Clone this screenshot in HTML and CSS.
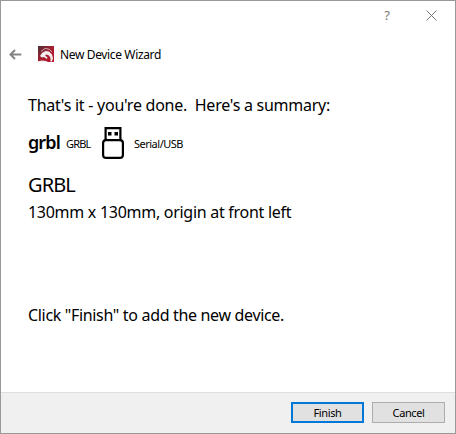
FILE: index.html
```html
<!DOCTYPE html>
<html lang="en">
<head>
<meta charset="utf-8">
<title>New Device Wizard</title>
<link rel="stylesheet" href="styles.css">
</head>
<body>
<div class="window">
  <div class="controls">
    <span class="help">?</span>
    <svg class="close" width="11" height="11" viewBox="0 0 11 11"><path d="M.5.5l10 10M10.500.5l-10 10" /></svg>
  </div>
  <header class="header">
    <svg class="back" width="13" height="11" viewBox="0 0 13 11"><path d="M12.300 5.500H1.500M6 1L1.500 5.500L6 10"/></svg>
    <svg class="app" width="16" height="16" viewBox="0 0 16 16">
      <defs><linearGradient id="red" x1="0" y1="0" x2="1" y2="1"><stop offset="0" stop-color="#4b3038"/><stop offset=".5" stop-color="#a51f30"/><stop offset="1" stop-color="#bd1029"/></linearGradient></defs>
      <path fill="url(#red)" d="M0 0h16v16H0z"/>
      <path fill="none" stroke="#c9a5aa" stroke-width="1" d="M3 5.500L7 2.500L11 3L14 6"/>
      <path fill="#f3eeee" d="M2 10L4 7L7.500 5L11 5.500L14 8.500L15 12L14 15.500H12.500L12.500 12L11 9.500L8.500 8.500L7 9.500L9.500 11.500L9 13L6 11L4 11.500Z"/>
      <path fill="#eee" d="M0 15.200l4-.8 4 .7L10 16H0z"/>
    </svg>
    <h1 class="title">New Device Wizard</h1>
  </header>
  <main class="content">
    <p class="line done">That's it - you're done.&nbsp; Here's a summary:</p>
    <div class="summary">
      <span class="logo">grbl</span>
      <span class="label grbl">GRBL</span>
      <svg class="usb" width="24" height="34" viewBox="0 0 24 34"><path fill="none" stroke="#000" stroke-width="2.200" d="M4.600 14V2.100h14.800V14"/><rect x="2.100" y="14.100" width="19.800" height="17.800" rx="3" fill="#fff" stroke="#000" stroke-width="2.200"/><path d="M7 6h3.500v3.500H7zM13.500 6H17v3.500h-3.500z"/></svg>
      <span class="label serial">Serial/USB</span>
    </div>
    <h2 class="device">GRBL</h2>
    <p class="line size">130mm x 130mm, origin at front left</p>
    <p class="line hint">Click "Finish" to add the new device.</p>
  </main>
  <footer class="footer">
    <button class="button primary">Finish</button>
    <button class="button">Cancel</button>
  </footer>
</div>
</body>
</html>
```
FILE: styles.css
```css
* { box-sizing: border-box; }
body { margin: 0; font-family: "Noto Sans", sans-serif; color: #000; }
h1, h2, p { margin: 0; font-weight: 400; white-space: nowrap; }
svg { display: block; flex: none; }
.window { width: 456px; height: 434px; border: 1px solid #999; background: #fff; display: flex; flex-direction: column; }
.controls { height: 28px; display: flex; justify-content: flex-end; align-items: center; padding-right: 18px; gap: 36px; }
.help { font-size: 13px; line-height: 14px; color: #777; }
.close { stroke: #777; stroke-width: 1; fill: none; }
.header { height: 49px; display: flex; align-items: center; padding: 1px 0 0 8px; }
.back { stroke: #858585; stroke-width: 2; fill: none; }
.app { margin-left: 16px; }
.title { margin: 1px 0 0 6px; font-size: 12px; line-height: 18px; letter-spacing: -.36px; }
.content { flex: 1; padding: 16px 0 0 27px; }
.line { font-size: 16px; line-height: 22px; }
.done { letter-spacing: -.26px; }
.summary { height: 34px; margin-top: 10px; display: flex; align-items: center; }
.logo { width: 38px; font-size: 18px; line-height: 20px; font-weight: 600; letter-spacing: -.9px; padding-bottom: 3px; }
.label { font-size: 11px; line-height: 16px; letter-spacing: -.5px; padding-top: 1px; }
.grbl { width: 35px; letter-spacing: -.85px; }
.serial { margin-left: 9px; }
.device { margin-top: 12px; font-size: 20px; line-height: 26px; letter-spacing: -.9px; }
.size { margin-top: 3px; letter-spacing: -.28px; }
.hint { margin-top: 81px; letter-spacing: -.33px; }
.footer { height: 41px; border-top: 1px solid #dfdfdf; background: #f0f0f0; display: flex; justify-content: flex-end; gap: 8px; padding: 9px 10px 0 0; }
.button { width: 73px; height: 21px; padding: 0; border: 1px solid #adadad; background: #e1e1e1; font: 11px/16px "Noto Sans", sans-serif; letter-spacing: -.4px; color: #000; }
.primary { border: 2px solid #0078d7; }
```
